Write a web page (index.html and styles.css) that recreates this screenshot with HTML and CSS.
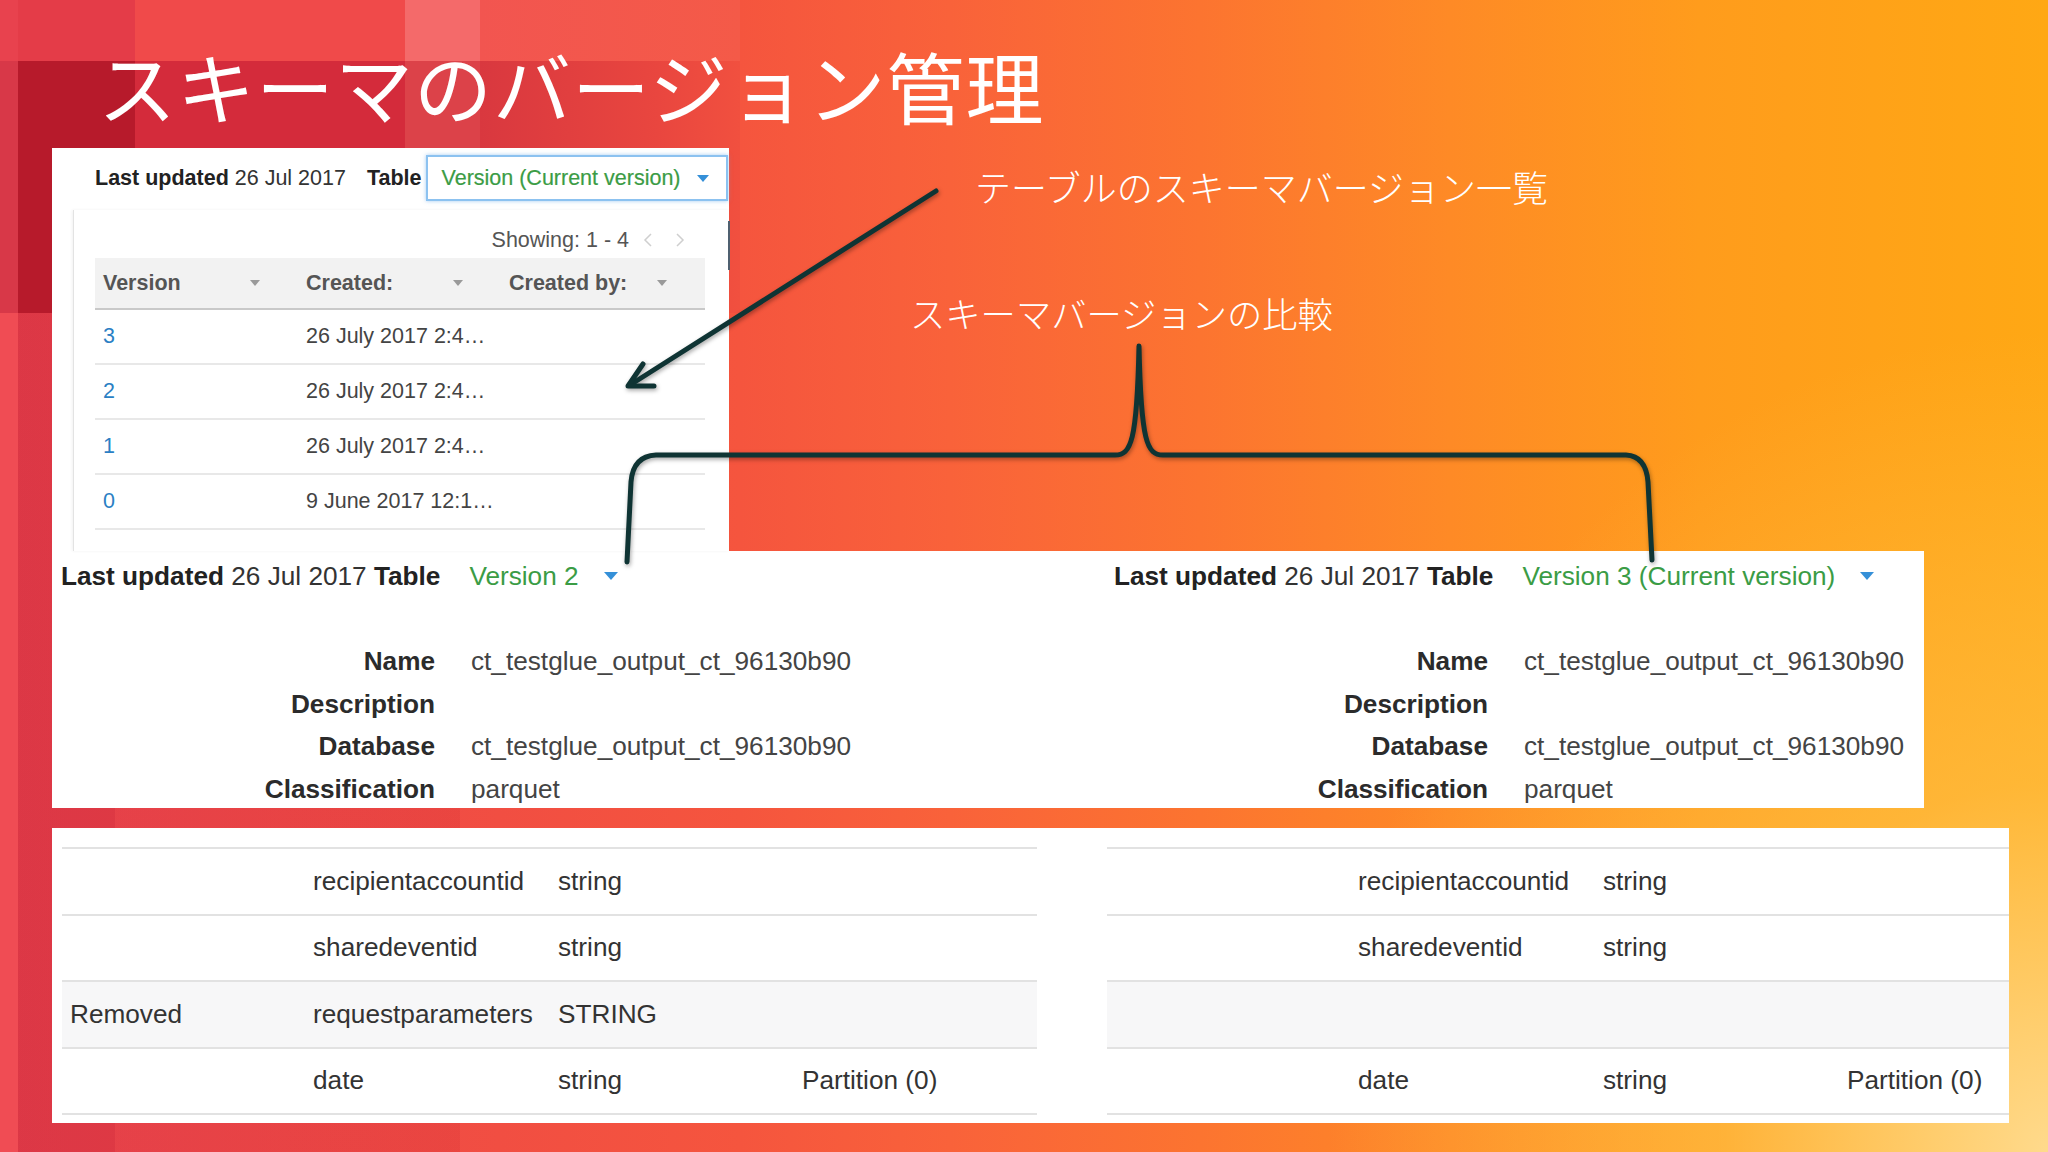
FILE: index.html
```html
<!DOCTYPE html>
<html lang="ja">
<head>
<meta charset="utf-8">
<title>スキーマのバージョン管理</title>
<link rel="stylesheet" href="styles.css">
</head>
<body>
<div class="slide">
  <h1 class="title">スキーマのバージョン管理</h1>

  <section class="panel versions">
    <div class="vhead">
      <span class="meta"><b>Last updated</b> 26 Jul 2017</span>
      <b class="tbl">Table</b>
      <div class="select"><span class="green">Version (Current version)</span><span class="tri"></span></div>
    </div>
    <div class="card">
      <div class="showing">
        <span>Showing: 1 - 4</span>
        <svg class="chev first" width="10" height="16" viewBox="0 0 10 16"><polyline points="8,2 2,8 8,14" fill="none" stroke="#cfcfcf" stroke-width="1.5"/></svg>
        <svg class="chev" width="10" height="16" viewBox="0 0 10 16"><polyline points="2,2 8,8 2,14" fill="none" stroke="#cfcfcf" stroke-width="1.5"/></svg>
      </div>
      <div class="vtable">
        <div class="vrow vheadrow">
          <div class="vcell"><span>Version</span><i class="stri"></i></div>
          <div class="vcell"><span>Created:</span><i class="stri"></i></div>
          <div class="vcell"><span>Created by:</span><i class="stri"></i></div>
        </div>
        <div class="vrow"><div class="vcell link">3</div><div class="vcell">26 July 2017 2:4…</div><div class="vcell"></div></div>
        <div class="vrow"><div class="vcell link">2</div><div class="vcell">26 July 2017 2:4…</div><div class="vcell"></div></div>
        <div class="vrow"><div class="vcell link">1</div><div class="vcell">26 July 2017 2:4…</div><div class="vcell"></div></div>
        <div class="vrow"><div class="vcell link">0</div><div class="vcell">9 June 2017 12:1…</div><div class="vcell"></div></div>
      </div>
    </div>
  </section>

  <section class="panel compare">
    <div class="side">
      <div class="shead"><span><b>Last updated</b> 26 Jul 2017 <b>Table</b></span><span class="green ver">Version 2</span><span class="tri big"></span></div>
      <dl class="props">
        <dt>Name</dt><dd>ct_testglue_output_ct_96130b90</dd>
        <dt>Description</dt><dd></dd>
        <dt>Database</dt><dd>ct_testglue_output_ct_96130b90</dd>
        <dt>Classification</dt><dd>parquet</dd>
      </dl>
    </div>
    <div class="side">
      <div class="shead"><span><b>Last updated</b> 26 Jul 2017 <b>Table</b></span><span class="green ver">Version 3 (Current version)</span><span class="tri big"></span></div>
      <dl class="props">
        <dt>Name</dt><dd>ct_testglue_output_ct_96130b90</dd>
        <dt>Description</dt><dd></dd>
        <dt>Database</dt><dd>ct_testglue_output_ct_96130b90</dd>
        <dt>Classification</dt><dd>parquet</dd>
      </dl>
    </div>
  </section>

  <section class="panel schema">
    <div class="stable left">
      <div class="srow"><div class="sc"></div><div class="sc">recipientaccountid</div><div class="sc">string</div><div class="sc"></div></div>
      <div class="srow"><div class="sc"></div><div class="sc">sharedeventid</div><div class="sc">string</div><div class="sc"></div></div>
      <div class="srow removed"><div class="sc">Removed</div><div class="sc">requestparameters</div><div class="sc">STRING</div><div class="sc"></div></div>
      <div class="srow"><div class="sc"></div><div class="sc">date</div><div class="sc">string</div><div class="sc">Partition (0)</div></div>
    </div>
    <div class="stable right">
      <div class="srow"><div class="sc"></div><div class="sc">recipientaccountid</div><div class="sc">string</div><div class="sc"></div></div>
      <div class="srow"><div class="sc"></div><div class="sc">sharedeventid</div><div class="sc">string</div><div class="sc"></div></div>
      <div class="srow removed"><div class="sc"></div><div class="sc"></div><div class="sc"></div><div class="sc"></div></div>
      <div class="srow"><div class="sc"></div><div class="sc">date</div><div class="sc">string</div><div class="sc">Partition (0)</div></div>
    </div>
  </section>

  <p class="note note-list">テーブルのスキーマバージョン一覧</p>
  <p class="note note-compare">スキーマバージョンの比較</p>

  <svg class="overlay" width="2048" height="1152" viewBox="0 0 2048 1152">
    <g fill="none" stroke="#0f3434" stroke-width="5" stroke-linecap="round" stroke-linejoin="round">
      <path d="M936,191 L630,385"/>
      <path d="M654,386 L628,386 L643,364"/>
      <path d="M627,562 L631,482 Q633,456 656,455 L1115,455 C1131,455 1137,442 1139,346 C1141,442 1147,455 1163,455 L1626,455 Q1646,456 1648,482 L1652,560"/>
    </g>
  </svg>
</div>
</body>
</html>
```

FILE: styles.css
```css
html, body {
  margin: 0;
  padding: 0;
}

body {
  width: 2048px;
  height: 1152px;
  overflow: hidden;
}

.slide {
  position: relative;
  width: 2048px;
  height: 1152px;
  overflow: hidden;
  font-family: "Liberation Sans", Arial, sans-serif;
  color: #333;
  background-color: #f25a40;
  background-image:
    linear-gradient(90deg, #e43c48 0 117px, #f04a4a 117px 387px, #f46a6a 387px 462px, #f25550 462px, #f45a48 722px),
    linear-gradient(90deg, #b71a2b 0 117px, #d42b3b 117px 387px, #dc4249 387px 462px, #d9383f 462px, #e9463f 640px, #f1503f 722px),
    linear-gradient(180deg, #e8424e 0 61px, #d83848 61px 313px, #f04c54 313px),
    linear-gradient(90deg, rgba(185,18,45,.28) 0 97px, rgba(200,30,50,.16) 97px 442px),
    radial-gradient(ellipse 720px 820px at 2048px 1152px, rgba(255,218,140,1) 0%, rgba(255,196,80,.55) 45%, rgba(255,170,30,0) 100%),
    linear-gradient(90deg, #ea4650 0, #f14e42 500px, #f5553e 740px, #f9623a 950px, #fc7430 1200px, #fe8a26 1450px, #ff9c1c 1700px, #ffa814 2048px);
  background-size:
    722px 61px,
    722px 252px,
    18px 1152px,
    442px 839px,
    2048px 1152px,
    2048px 1152px;
  background-position:
    18px 0,
    18px 61px,
    0 0,
    18px 313px,
    0 0,
    0 0;
  background-repeat: no-repeat;
}

.title {
  margin: 0;
  padding: 46px 0 0 98px;
  height: 78px;
  font: 400 78px/78px "Noto Sans CJK JP", sans-serif;
  letter-spacing: 1px;
  color: #fff;
  white-space: nowrap;
}

.panel {
  background: #fff;
  box-sizing: border-box;
}

.green {
  color: #3b9c45;
}

.tri {
  display: inline-block;
  width: 0;
  height: 0;
  border-left: 6.5px solid transparent;
  border-right: 6.5px solid transparent;
  border-top: 7px solid #3590d8;
}

.tri.big {
  border-left-width: 7px;
  border-right-width: 7px;
  border-top-width: 8px;
  margin-left: 25px;
}

/* ---------- version list panel ---------- */
.versions {
  margin: 24px 0 0 52px;
  width: 677px;
  height: 403px;
  padding-top: 7px;
}

.vhead {
  display: flex;
  align-items: center;
  height: 46px;
  padding-left: 43px;
  font-size: 21.5px;
  white-space: nowrap;
}

.vhead b {
  color: #222;
}

.tbl {
  margin-left: 21px;
}

.select {
  margin-left: 4px;
  width: 302px;
  height: 46px;
  box-sizing: border-box;
  border: 2px solid #8cc2f0;
  box-shadow: 0 0 4px rgba(90, 160, 230, .55);
  display: flex;
  align-items: center;
  padding-left: 14px;
  background: #fff;
}

.select .green {
  font-weight: 500;
  -webkit-text-stroke: 0.2px #3b9c45;
}

.select .tri {
  margin-left: 16px;
}

.card {
  position: relative;
  margin: 9px 0 0 21px;
  height: 341px;
  box-sizing: border-box;
  border-left: 1px solid #e3e3e3;
  box-shadow: -1px 0 3px rgba(0, 0, 0, .06);
  padding: 14px 24px 0 21px;
}

.card::after {
  content: "";
  position: absolute;
  right: -1px;
  top: 11px;
  width: 2px;
  height: 49px;
  background: #4f6070;
}

.showing {
  display: flex;
  justify-content: flex-end;
  align-items: center;
  height: 32px;
  margin-bottom: 2px;
  padding-right: 20px;
  font-size: 21.5px;
  color: #555;
}

.chev {
  display: block;
  margin-left: 22px;
}

.chev.first {
  margin-left: 14px;
}

.vrow {
  display: grid;
  grid-template-columns: 203px 203px 1fr;
  height: 55px;
  box-sizing: border-box;
  border-bottom: 2px solid #e8e8e8;
  align-items: center;
  font-size: 21.5px;
  color: #444;
}

.vheadrow {
  height: 52px;
  background: #f2f2f2;
  border-bottom: 2px solid #c9c9c9;
  font-weight: bold;
  color: #555;
}

.vcell {
  padding-left: 8px;
  white-space: nowrap;
}

.vheadrow .vcell {
  display: flex;
  justify-content: space-between;
  align-items: center;
  padding-right: 38px;
}

.stri {
  display: block;
  width: 0;
  height: 0;
  border-left: 5.5px solid transparent;
  border-right: 5.5px solid transparent;
  border-top: 6px solid #9a9a9a;
}

.vcell.link {
  color: #2b7fc4;
}

/* ---------- compare panel ---------- */
.compare {
  margin-left: 52px;
  width: 1872px;
  height: 257px;
  padding: 7px 0 0 9px;
  display: grid;
  grid-template-columns: 1053px 1fr;
  font-size: 26.2px;
}

.shead {
  display: flex;
  align-items: center;
  height: 36px;
  white-space: nowrap;
  color: #333;
}

.shead b {
  color: #222;
}

.ver {
  margin-left: 29px;
}

.props {
  display: grid;
  grid-template-columns: 374px 1fr;
  column-gap: 36px;
  margin: 46px 0 0;
  line-height: 42.5px;
}

.props dt {
  text-align: right;
  font-weight: bold;
  color: #2b2b2b;
  min-height: 42.5px;
}

.props dd {
  margin: 0;
  color: #444;
  min-height: 42.5px;
  white-space: nowrap;
}

/* ---------- schema panel ---------- */
.schema {
  margin: 20px 0 0 52px;
  width: 1957px;
  height: 295px;
  padding: 19px 0 0 10px;
  display: flex;
  gap: 70px;
}

.stable {
  border-top: 2px solid #e2e2e2;
}

.stable.left {
  width: 975px;
}

.stable.right {
  flex: 1;
}

.srow {
  display: grid;
  grid-template-columns: 243px 245px 244px 1fr;
  height: 66.5px;
  box-sizing: border-box;
  border-bottom: 2px solid #e2e2e2;
  align-items: center;
  font-size: 26.2px;
  color: #333;
}

.srow.removed {
  background: #f7f7f8;
}

.sc {
  padding-left: 8px;
  white-space: nowrap;
}

/* ---------- annotations ---------- */
.note {
  position: absolute;
  margin: 0;
  color: #fff;
  font-family: "Noto Sans CJK JP", sans-serif;
  font-weight: 300;
  white-space: nowrap;
  z-index: 2;
}

.note-list {
  left: 975px;
  top: 166px;
  font-size: 36px;
  line-height: 40px;
}

.note-compare {
  left: 910px;
  top: 293px;
  font-size: 35.3px;
  line-height: 40px;
}

.overlay {
  position: absolute;
  left: 0;
  top: 0;
  z-index: 3;
  pointer-events: none;
  filter: drop-shadow(1px 2px 2px rgba(0, 0, 0, .35));
}
```
